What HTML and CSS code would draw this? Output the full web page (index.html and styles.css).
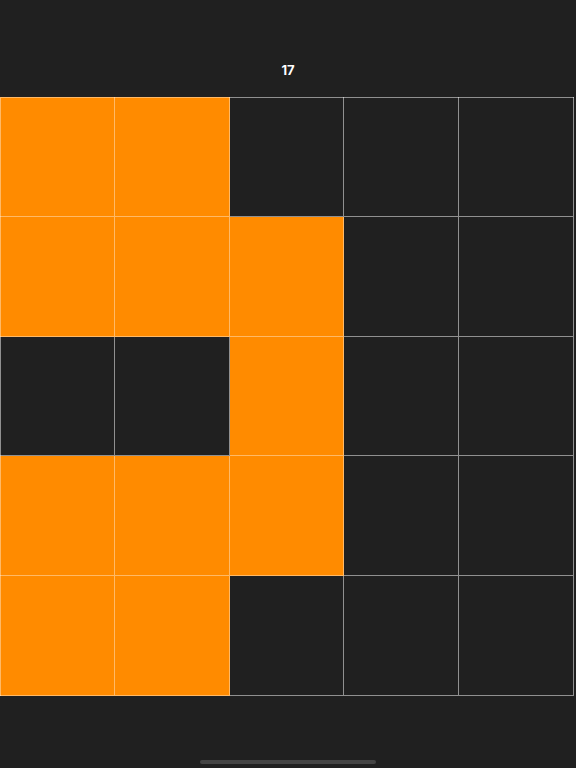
FILE: index.html
```html
<!DOCTYPE html>
<html>
<head>
<meta charset="utf-8">
<link rel="stylesheet" href="styles.css">
</head>
<body>
<div class="screen">
  <header class="top"><span class="count">17</span></header>
  <div class="board">
    <div class="cell on"></div><div class="cell on"></div><div class="cell"></div><div class="cell"></div><div class="cell"></div>
    <div class="cell on"></div><div class="cell on"></div><div class="cell on"></div><div class="cell"></div><div class="cell"></div>
    <div class="cell"></div><div class="cell"></div><div class="cell on"></div><div class="cell"></div><div class="cell"></div>
    <div class="cell on"></div><div class="cell on"></div><div class="cell on"></div><div class="cell"></div><div class="cell"></div>
    <div class="cell on"></div><div class="cell on"></div><div class="cell"></div><div class="cell"></div><div class="cell"></div>
  </div>
  <div class="bottom"><div class="home"></div></div>
</div>
</body>
</html>
```

FILE: styles.css
```css
html, body {
  margin: 0;
  padding: 0;
  background: #202020;
}
.screen {
  width: 576px;
  height: 768px;
  display: flex;
  flex-direction: column;
  font-family: "Inter", "Liberation Sans", sans-serif;
}
.top {
  height: 97px;
  display: flex;
  align-items: flex-end;
  justify-content: center;
  box-sizing: border-box;
  padding-bottom: 19px;
}
.count {
  color: #ffffff;
  font-weight: 700;
  font-size: 13px;
  line-height: 16px;
}
.board {
  width: 574px;
  height: 599px;
  display: grid;
  grid-template-columns: repeat(5, 1fr);
  grid-template-rows: repeat(5, 1fr);
  --line: rgba(255,255,255,0.5);
  --line-on: rgba(255,255,255,0.4);
}
.cell {
  background: transparent;
  box-shadow: inset -1px -1px 0 var(--line);
}
.cell.on {
  background-color: #ff8b00;
  box-shadow: inset -1px -1px 0 var(--line-on);
}
.cell:nth-child(-n+5) {
  box-shadow: inset -1px -1px 0 var(--line), inset 0 1px 0 var(--line);
}
.cell.on:nth-child(-n+5) {
  box-shadow: inset -1px -1px 0 var(--line-on), inset 0 1px 0 var(--line-on);
}
.cell:nth-child(5n+1) {
  box-shadow: inset -1px -1px 0 var(--line), inset 1px 0 0 var(--line);
}
.cell.on:nth-child(5n+1) {
  box-shadow: inset -1px -1px 0 var(--line-on), inset 1px 0 0 var(--line-on);
}
.cell.on:nth-child(1) {
  box-shadow: inset -1px -1px 0 var(--line-on), inset 1px 1px 0 var(--line-on);
}
.bottom {
  flex: 1;
  display: flex;
  align-items: flex-end;
  justify-content: center;
  padding-bottom: 4px;
}
.home {
  width: 176px;
  height: 4px;
  border-radius: 2px;
  background: #444444;
}
```
